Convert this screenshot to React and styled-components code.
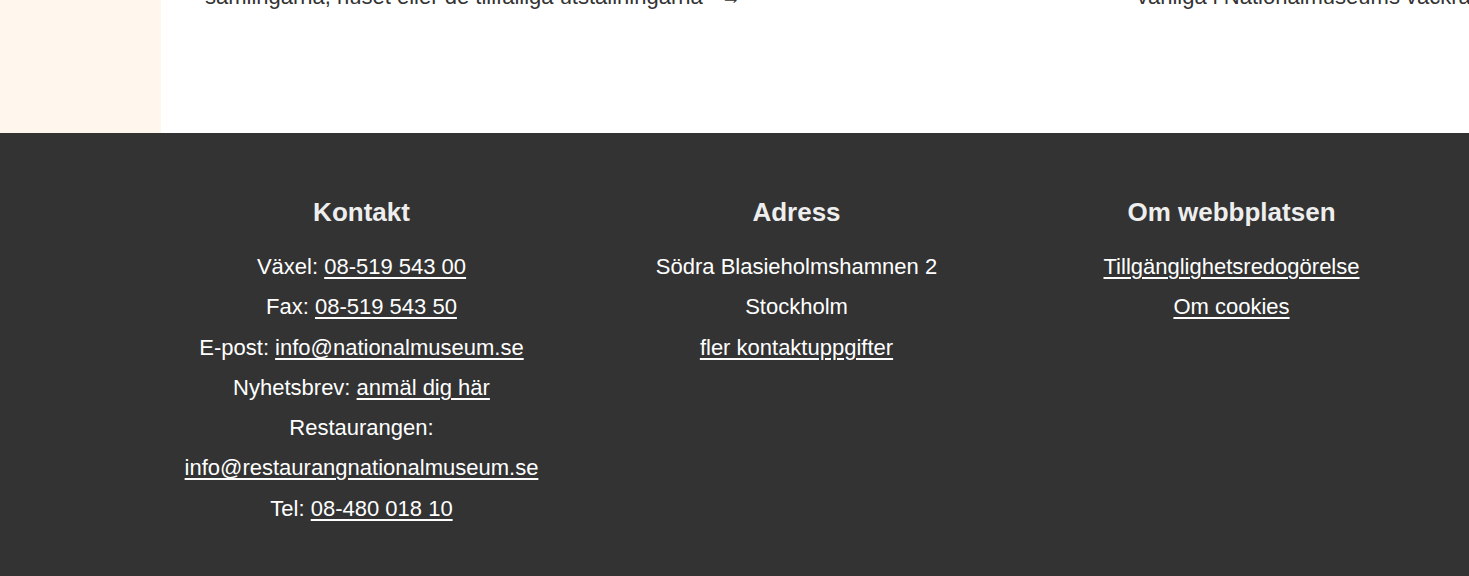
import React from "react";
import styled, { createGlobalStyle } from "styled-components";

const Global = createGlobalStyle`
  html, body { margin: 0; padding: 0; background: #333333; }
  body { font-family: "Liberation Sans", Arial, sans-serif; overflow: hidden; }
  * { box-sizing: border-box; }
`;

const Page = styled.div`
  width: 1469px;
  min-height: 576px;
  display: flex;
  flex-direction: column;
`;

const Upper = styled.section`
  height: 133px;
  display: grid;
  grid-template-columns: 161px 1fr;
  overflow: hidden;
  background: #ffffff;
`;

const Sidebar = styled.div`
  background: #fff7ee;
`;

const Cards = styled.div`
  display: grid;
  grid-template-columns: 932px 1fr;
  padding-left: 44px;
  align-content: end;
  padding-bottom: 119px;
  overflow: hidden;
`;

const CardText = styled.p`
  margin: 0;
  font-size: 22px;
  line-height: 33px;
  color: #333333;
  white-space: nowrap;
`;

const Arrow = styled.span`
  margin-left: 18px;
  font-size: 20px;
`;

const Footer = styled.footer`
  flex: 1;
  background: #333333;
  display: grid;
  grid-template-columns: repeat(3, 435px);
  padding: 63px 0 40px 144px;
`;

const Column = styled.div`
  display: flex;
  flex-direction: column;
  align-items: center;
  text-align: center;
  padding: 0 20px;
`;

const Heading = styled.h2`
  margin: 0 0 19px;
  font-size: 26px;
  line-height: 32px;
  font-weight: 700;
  color: #eeeeee;
`;

const Line = styled.p`
  margin: 0;
  font-size: 22px;
  line-height: 40.3px;
  color: #ffffff;
`;

const Link = styled.a`
  color: #ffffff;
  text-decoration: underline;
  text-decoration-thickness: 2px;
  text-underline-offset: 3px;
`;

export default function App() {
  return (
    <>
      <Global />
      <Page>
        <Upper>
          <Sidebar />
          <Cards>
            <CardText>
              samlingarna, huset eller de tillfälliga utställningarna<Arrow>→</Arrow>
            </CardText>
            <CardText>vänliga i Nationalmuseums vackra lokaler</CardText>
          </Cards>
        </Upper>
        <Footer>
          <Column>
            <Heading>Kontakt</Heading>
            <Line>
              Växel: <Link href="#">08-519 543 00</Link>
            </Line>
            <Line>
              Fax: <Link href="#">08-519 543 50</Link>
            </Line>
            <Line>
              E-post: <Link href="#">info@nationalmuseum.se</Link>
            </Line>
            <Line>
              Nyhetsbrev: <Link href="#">anmäl dig här</Link>
            </Line>
            <Line>
              Restaurangen: <Link href="#">info@restaurangnationalmuseum.se</Link>
            </Line>
            <Line>
              Tel: <Link href="#">08-480 018 10</Link>
            </Line>
          </Column>
          <Column>
            <Heading>Adress</Heading>
            <Line>Södra Blasieholmshamnen 2</Line>
            <Line>Stockholm</Line>
            <Line>
              <Link href="#">fler kontaktuppgifter</Link>
            </Line>
          </Column>
          <Column>
            <Heading>Om webbplatsen</Heading>
            <Line>
              <Link href="#">Tillgänglighetsredogörelse</Link>
            </Line>
            <Line>
              <Link href="#">Om cookies</Link>
            </Line>
          </Column>
        </Footer>
      </Page>
    </>
  );
}
